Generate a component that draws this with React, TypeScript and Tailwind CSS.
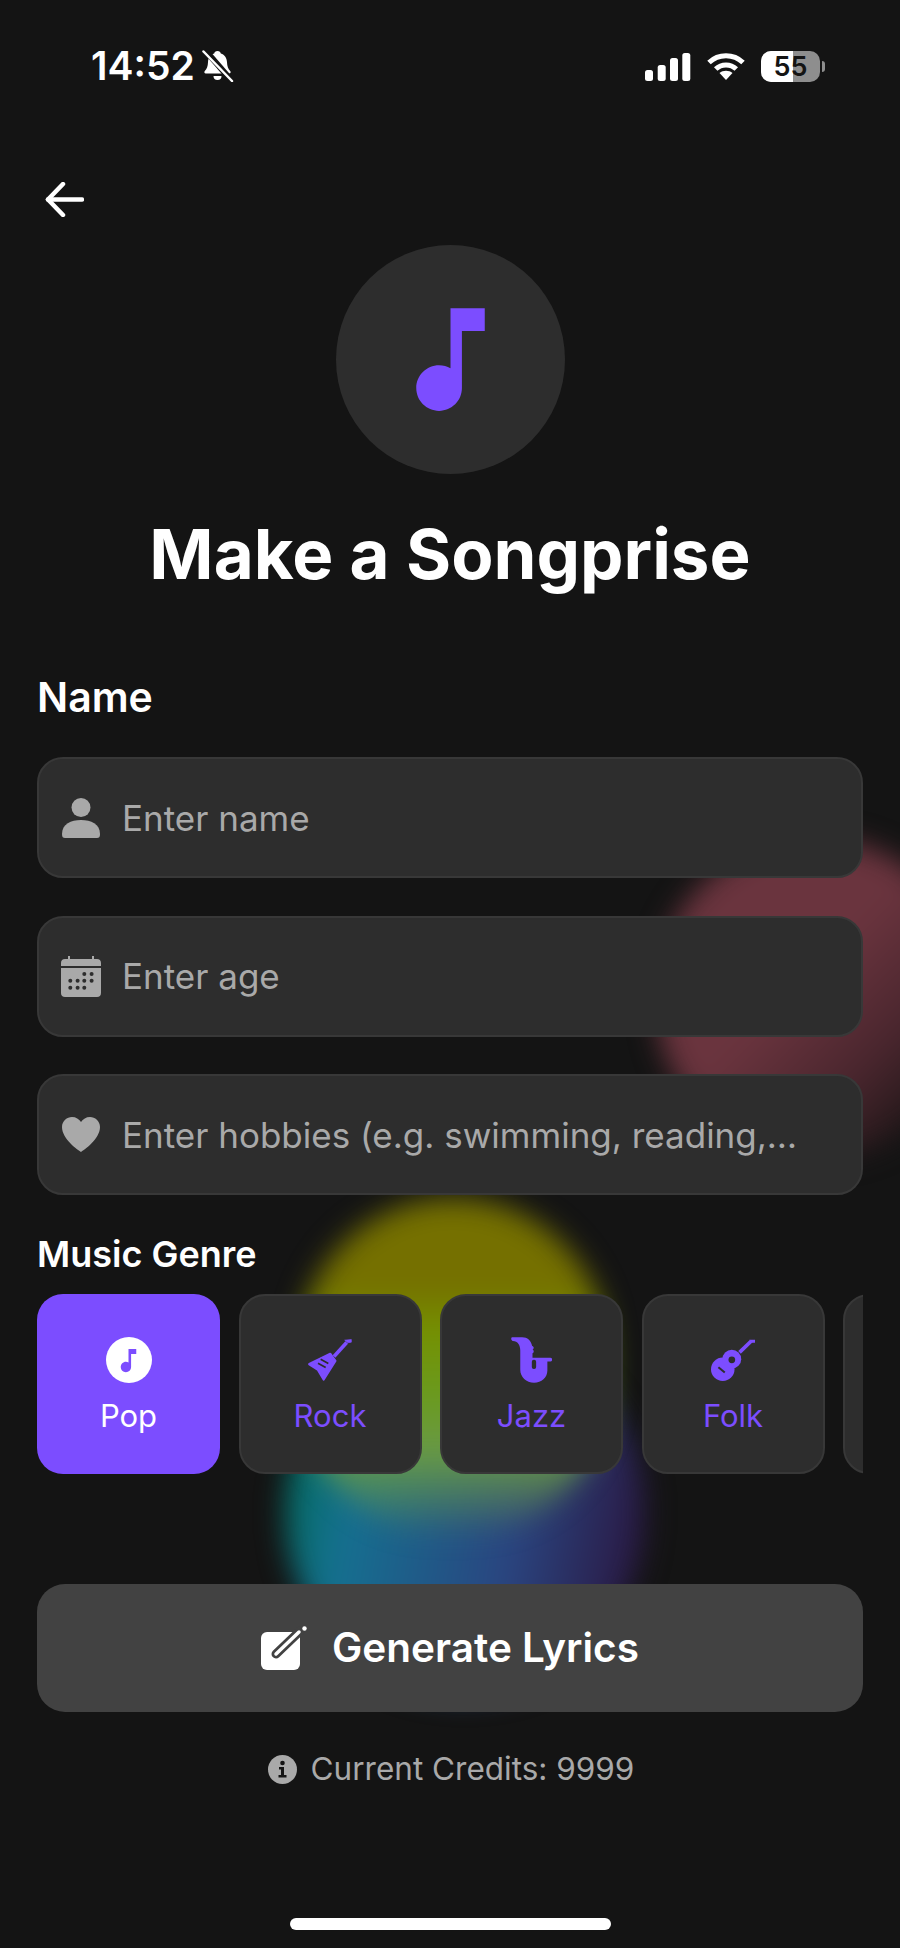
import React from "react";
import { MdMusicNote } from "react-icons/md";

const BellSlash = () => (
  <svg width="32" height="32" viewBox="0 0 32 32" fill="none">
    <path
      d="M15.500 1c2 0 3 1.200 3.300 2.600 4 1.200 6 4.600 6.200 8.600.2 4 1 6.500 3.200 8.800.9 1 .4 2.500-1 2.500H3.800c-1.400 0-1.900-1.500-1-2.500C5 18.700 5.800 16.200 6 12.200c.2-4 2.200-7.400 6.200-8.600C12.500 2.200 13.500 1 15.500 1z"
      fill="#fff"
    />
    <path d="M11.500 26h8a4 4 0 0 1-8 0z" fill="#fff" />
    <line x1="3" y1="0" x2="29" y2="30" stroke="#141414" strokeWidth="6" />
    <line x1="1.500" y1="1.500" x2="30" y2="31" stroke="#fff" strokeWidth="2.500" strokeLinecap="round" />
  </svg>
);

const SignalIcon = () => (
  <svg width="46" height="29" viewBox="0 0 46 29" fill="#fff">
    <rect x="0" y="18" width="8" height="11" rx="2.500" />
    <rect x="12.700" y="13" width="8" height="16" rx="2.500" />
    <rect x="25" y="6" width="8" height="23" rx="2.500" />
    <rect x="37.300" y="1" width="8" height="28" rx="2.500" />
  </svg>
);

const WifiIcon = () => (
  <svg width="38" height="28" viewBox="0 0 38 28" fill="none">
    <path d="M2 10.500C11.500 1.500 26.500 1.500 36 10.500" stroke="#fff" strokeWidth="5" />
    <path d="M8.700 17C14.500 11.500 23.500 11.500 29.300 17" stroke="#fff" strokeWidth="5" />
    <path d="M19 28L12.500 21C16 18 22 18 25.500 21L19 28z" fill="#fff" />
  </svg>
);

const Battery = () => (
  <div className="flex items-center">
    <div className="relative flex h-[31px] w-[59px] items-center justify-center overflow-hidden rounded-[10px] bg-[#8e8e8e]">
      <div className="absolute inset-y-0 left-0 w-[32px] bg-white" />
      <span className="relative text-[27px] font-semibold leading-none text-[#141414]">55</span>
    </div>
    <div className="ml-[2px] h-[11px] w-[3px] rounded-r-full bg-[#8e8e8e]" />
  </div>
);

const BackArrow = () => (
  <svg width="39" height="35" viewBox="0 0 39 35" fill="none" stroke="#fff" strokeWidth="4.500" strokeLinecap="round" strokeLinejoin="round">
    <path d="M37 17.500H3" />
    <path d="M18 2L3 17.500L18 33" />
  </svg>
);

const PersonIcon = () => (
  <svg width="38" height="40" viewBox="0 0 38 40" fill="#a9a9a9">
    <circle cx="19" cy="9.500" r="9.500" />
    <path d="M0 36C0 26 9 22 19 22C29 22 38 26 38 36C38 39 37 40 35 40H3C1 40 0 39 0 36Z" />
  </svg>
);

const CalendarIcon = () => (
  <svg width="40" height="41" viewBox="0 0 40 41">
    <path
      d="M7 0h2v3h22V0h2v3h3c2.500 0 4 1.500 4 4v3H0V7c0-2.500 1.500-4 4-4h3V0z"
      fill="#a9a9a9"
    />
    <path d="M0 12h40v25c0 2.500-1.500 4-4 4H4c-2.500 0-4-1.500-4-4V12z" fill="#a9a9a9" />
    {[
      [23.300, 18],
      [30.600, 18],
      [9.300, 24.700],
      [16.600, 24.700],
      [23.300, 24.700],
      [30.600, 24.700],
      [9.300, 31.700],
      [16.600, 31.700],
      [23.300, 31.700],
    ].map(([cx, cy]) => (
      <circle key={`${cx}-${cy}`} cx={cx} cy={cy} r="2" fill="#2d2d2d" />
    ))}
  </svg>
);

const HeartIcon = () => (
  <svg width="38" height="35" viewBox="0 0 38 35" fill="#a9a9a9">
    <path d="M19 35C16 33 0 22 0 10C0 4 5 0 10 0C14 0 17 2 19 5C21 2 24 0 28 0C33 0 38 4 38 10C38 22 22 33 19 35Z" />
  </svg>
);

const RockIcon = () => (
  <svg width="44" height="42" viewBox="0 0 132 125">
    <path
      d="M4 75L67 44L82 65L47 121L30 92L4 75Z"
      fill="#7c4dff"
      stroke="#7c4dff"
      strokeWidth="7"
      strokeLinejoin="round"
    />
    <path d="M78 52L116 10" stroke="#7c4dff" strokeWidth="11" />
    <path d="M110 3L130 1V9L119 11L110 3Z" fill="#7c4dff" stroke="#7c4dff" strokeWidth="2" strokeLinejoin="round" />
    <path d="M30 72L53 85M38 60L61 73" stroke="#2d2d2d" strokeWidth="5" />
  </svg>
);

const JazzIcon = () => (
  <svg width="41" height="46" viewBox="0 0 124 137">
    <path
      d="M3 0H34C50 0 60 10 64 26C70 28 70 35 65 37C70 39 70 46 65 48L65 62H119A5.500 5.500 0 0 1 119 73H110V100C110 122 92 137 70 137C46 137 28 120 28 98V40C28 22 20 12 6 11C0 10-1 2 3 0Z"
      fill="#7c4dff"
    />
    <rect x="63" y="68" width="13" height="28" rx="6" fill="#2d2d2d" />
  </svg>
);

const FolkIcon = () => (
  <svg width="44" height="42" viewBox="0 0 131 125">
    <circle cx="35" cy="90" r="35" fill="#7c4dff" />
    <circle cx="62" cy="60" r="28" fill="#7c4dff" />
    <circle cx="62" cy="62" r="10" fill="#2d2d2d" />
    <path d="M22 84L41 100" stroke="#2d2d2d" strokeWidth="6" />
    <path d="M85 40L120 6" stroke="#7c4dff" strokeWidth="11" />
    <path d="M114 2H131V11H122L114 2Z" fill="#7c4dff" />
  </svg>
);

const EditIcon = () => (
  <svg width="46" height="45" viewBox="0 0 46 45" fill="none">
    <rect x="0" y="6" width="39" height="38" rx="6" fill="#fff" />
    <path d="M15 28L39 5" stroke="#424242" strokeWidth="9" strokeLinecap="round" />
    <path d="M15 28L38 6" stroke="#fff" strokeWidth="3.500" strokeLinecap="round" />
    <circle cx="43.500" cy="2.500" r="2.200" fill="#fff" />
  </svg>
);

const InfoIcon = () => (
  <svg width="29" height="29" viewBox="0 0 29 29">
    <circle cx="14.500" cy="14.500" r="14.500" fill="#a9a9a9" />
    <circle cx="14.500" cy="8" r="2.300" fill="#141414" />
    <path d="M11 12H16V20H18.500V22.500H10.500V20H13V14.500H11V12Z" fill="#141414" />
  </svg>
);

const fields = [
  { icon: <PersonIcon />, text: "Enter name" },
  { icon: <CalendarIcon />, text: "Enter age" },
  { icon: <HeartIcon />, text: "Enter hobbies (e.g. swimming, reading,…" },
];

const genres = [
  { label: "Rock", icon: <RockIcon /> },
  { label: "Jazz", icon: <JazzIcon /> },
  { label: "Folk", icon: <FolkIcon /> },
];

export default function App() {
  return (
    <div className="relative h-[1948px] w-[900px] overflow-hidden bg-[#141414] font-[Inter,sans-serif] text-white">
      {/* blurred colour blobs behind the form */}
      <div className="absolute left-[655px] top-[838px] h-[320px] w-[320px] rounded-full bg-[linear-gradient(135deg,#6a343e_45%,#4a262e_68%,#1c1516_88%)] blur-[14px]" />
      <div className="absolute left-[285px] top-[1330px] h-[365px] w-[360px] rounded-full bg-[linear-gradient(100deg,#006a55_3%,#157090_22%,#2a4580_62%,#2a1a45_92%)] blur-[14px]" />
      <div className="absolute left-[298px] top-[1198px] h-[340px] w-[310px] rounded-full bg-[linear-gradient(180deg,#757000_26%,#759000_38%,#6a9a1e_58%,#6a9a44_74%,rgba(106,154,68,0)_100%)] blur-[14px]" />

      <div className="relative flex flex-col">
        <div className="flex h-[86px] items-center justify-between pl-[91px] pr-[75px] pt-[46px]">
          <div className="flex items-center gap-[7px]">
            <span className="text-[39px] font-semibold leading-[40px]">14:52</span>
            <BellSlash />
          </div>
          <div className="flex items-center gap-[16px]">
            <SignalIcon />
            <WifiIcon />
            <Battery />
          </div>
        </div>

        <div className="px-[37px]">
          <div className="ml-[8px] mt-[96px] flex">
            <BackArrow />
          </div>
          <div className="mx-auto mt-[28px] flex h-[229px] w-[229px] items-center justify-center rounded-full bg-[#2d2d2d] text-[#7c4dff]">
            <MdMusicNote size={137} />
          </div>
          <h1 className="mt-[40px] text-center text-[69px] font-bold leading-[80px]">Make a Songprise</h1>

          <h2 className="mt-[81px] text-[41px] font-semibold leading-[44px]">Name</h2>
          <div className="mt-[38px] flex flex-col gap-[37.500px]">
            {fields.map((f) => (
              <div
                key={f.text}
                className="flex h-[121px] items-center rounded-[26px] border-2 border-[#383838] bg-[#2d2d2d] pl-[21px]"
              >
                <div className="flex w-[42px] justify-center">{f.icon}</div>
                <span className="ml-[20px] text-[35px] leading-[44px] text-[#a9a9a9]">{f.text}</span>
              </div>
            ))}
          </div>

          <h2 className="mt-[37px] text-[36px] font-semibold leading-[44px]">Music Genre</h2>
          <div className="mt-[18px] flex gap-[18.500px] overflow-hidden">
            <div className="flex h-[180px] w-[183px] shrink-0 flex-col items-center rounded-[26px] bg-[#7c4dff] pt-[43px]">
              <div className="flex h-[46px] w-[46px] items-center justify-center rounded-full bg-white text-[#7c4dff]">
                <MdMusicNote size={31} />
              </div>
              <span className="mt-[14px] text-[31px] leading-[38px]">Pop</span>
            </div>
            {genres.map((g) => (
              <div
                key={g.label}
                className="flex h-[180px] w-[183px] shrink-0 flex-col items-center rounded-[26px] border-2 border-[#383838] bg-[#2d2d2d] pt-[41px]"
              >
                <div className="flex h-[46px] items-center justify-center">{g.icon}</div>
                <span className="mt-[14px] text-[31px] leading-[38px] text-[#7c4dff]">{g.label}</span>
              </div>
            ))}
            <div className="h-[180px] w-[183px] shrink-0 rounded-[26px] border-2 border-[#383838] bg-[#2d2d2d]" />
          </div>

          <button className="mt-[110px] flex h-[128px] w-full items-center justify-center gap-[25px] rounded-[28px] bg-[#424242]">
            <EditIcon />
            <span className="text-[40.500px] font-semibold leading-[48px]">Generate Lyrics</span>
          </button>

          <div className="mt-[37px] flex h-[40px] items-center justify-center gap-[14px] pl-[2px]">
            <InfoIcon />
            <span className="text-[31.500px] leading-[40px] text-[#a9a9a9]">Current Credits: 9999</span>
          </div>
        </div>

        <div className="mx-auto mt-[129px] h-[12px] w-[321px] rounded-full bg-white" />
      </div>
    </div>
  );
}
